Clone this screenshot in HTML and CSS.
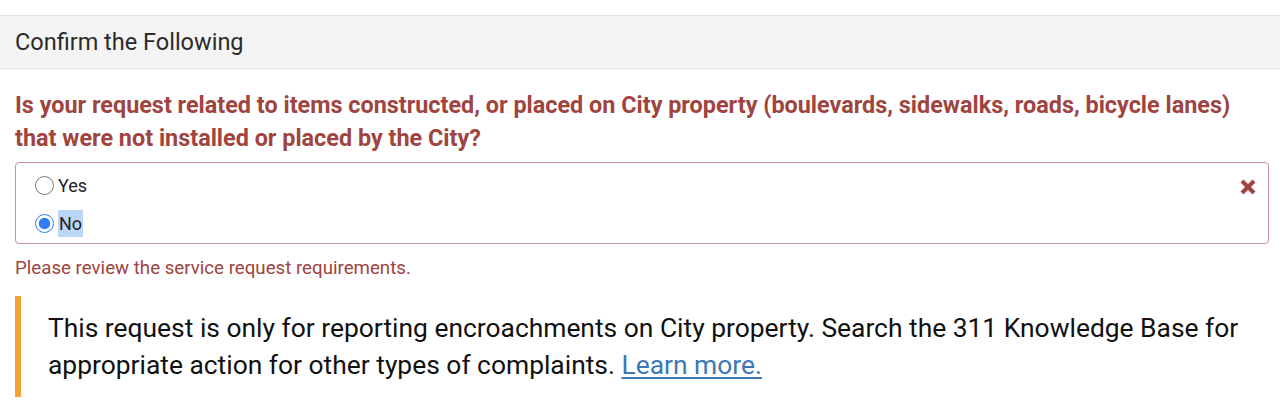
FILE: index.html
```html
<!DOCTYPE html>
<html lang="en">
<head>
    <meta charset="UTF-8">
    <meta name="viewport" content="width=device-width, initial-scale=1.0">
    <title>Confirm the Following</title>
    <link rel="stylesheet" href="styles.css">
</head>
<body>
    <div class="section-header">
        <h2>Confirm the Following</h2>
    </div>
    <div class="section-body">
        <div class="question">
            <h3 class="question-label">Is your request related to items constructed, or placed on City property (boulevards, sidewalks, roads, bicycle lanes) that were not installed or placed by the City?</h3>
            <div class="choice-box">
                <div class="choices">
                    <label class="choice"><input type="radio" name="confirm" value="yes"><span>Yes</span></label>
                    <label class="choice"><input type="radio" name="confirm" value="no" checked><span class="selected">No</span></label>
                </div>
                <svg class="error-icon" width="18" height="18" viewBox="0 0 18 18" aria-hidden="true">
                    <path d="M3 3 L15 15 M15 3 L3 15" stroke="#a0443f" stroke-width="4.2"/>
                </svg>
            </div>
            <p class="error-msg">Please review the service request requirements.</p>
        </div>
        <div class="notice">
            <p>This request is only for reporting encroachments on City property. Search the 311 Knowledge Base for appropriate action for other types of complaints. <a href="#">Learn more.</a></p>
        </div>
    </div>
</body>
</html>
```

FILE: styles.css
```css
body {
    margin: 0;
    font-family: 'Roboto', 'Liberation Sans', sans-serif;
    color: #222;
    background-color: #fff;
}
.section-header {
    margin-top: 15px;
    background-color: #f4f4f4;
    border-top: 1px solid #e2e2e2;
    border-bottom: 1px solid #e2e2e2;
    height: 52px;
    display: flex;
    align-items: center;
    padding: 0 15px;
}
.section-header h2 {
    margin: 0;
    font-size: 23.5px;
    font-weight: 400;
    color: #2b2b2b;
}
.section-body {
    padding: 0 11px 0 15px;
}
.question-label {
    margin: 20px 0 0;
    font-size: 23.4px;
    font-weight: 700;
    line-height: 33px;
    color: #a0443f;
}
.choice-box {
    margin-top: 7px;
    border: 1px solid #c99393;
    border-radius: 4px;
    display: flex;
    justify-content: space-between;
    padding: 3px 11px 0 19px;
    height: 77px;
}
.choices {
    display: flex;
    flex-direction: column;
}
.choice {
    display: flex;
    align-items: center;
    height: 38px;
    font-size: 18px;
    color: #222;
}
.choice input {
    width: 19px;
    height: 19px;
    margin: 0 4px 0 0;
    accent-color: #2e7cf6;
}
.choice .selected {
    background-color: #bcd6f8;
    padding: 3px 1px;
}
.error-icon {
    margin-top: 12px;
}
.error-msg {
    margin: 13px 0 0;
    font-size: 18.7px;
    color: #a0443f;
}
.notice {
    margin-top: 17px;
    border-left: 6px solid #f2a33a;
    padding: 14px 27px 13px;
}
.notice p {
    margin: 0;
    font-size: 26.4px;
    line-height: 37px;
    color: #111;
}
.notice a {
    color: #3a78b8;
    text-decoration-thickness: 2px;
    text-underline-offset: 3px;
}
```
